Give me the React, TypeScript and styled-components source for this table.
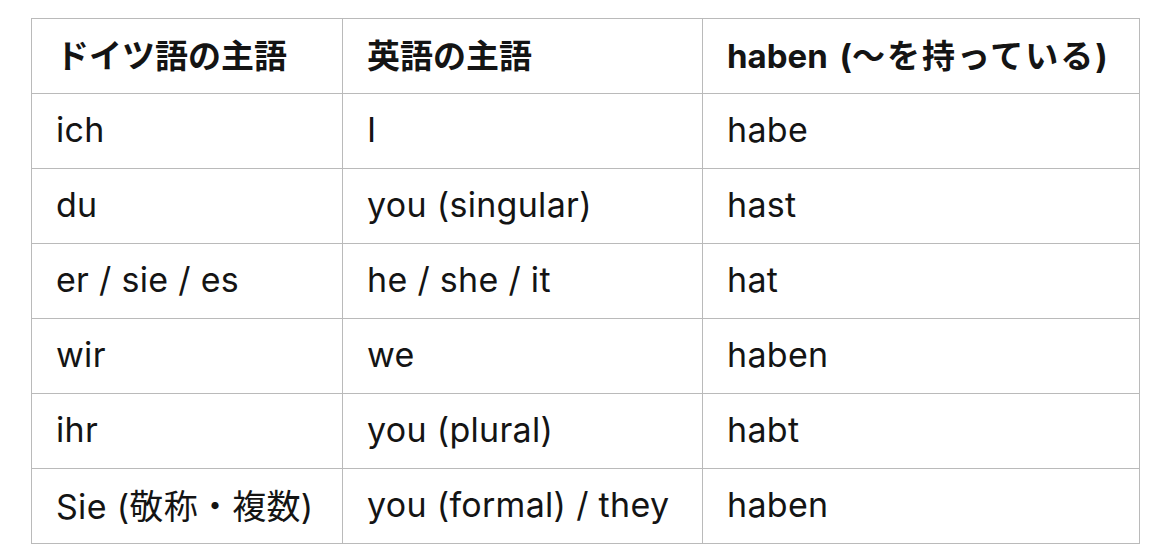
import React from 'react';
import styled, { createGlobalStyle } from 'styled-components';

type Row = [string, string, string];

const columns = [311, 360, 437];

const rows: Row[] = [
  ['ich', 'I', 'habe'],
  ['du', 'you (singular)', 'hast'],
  ['er / sie / es', 'he / she / it', 'hat'],
  ['wir', 'we', 'haben'],
  ['ihr', 'you (plural)', 'habt'],
  ['Sie (敬称・複数)', 'you (formal) / they', 'haben'],
];

const GlobalStyle = createGlobalStyle`
  html, body {
    margin: 0;
    padding: 0;
    background: #ffffff;
  }
  body {
    font-family: Inter, "Noto Sans CJK JP", sans-serif;
    color: #141414;
  }
`;

function App() {
  return (
    <Page>
      <GlobalStyle />
      <Table>
        <colgroup>
          {columns.map((w, i) => (
            <Col key={i} $width={w} />
          ))}
        </colgroup>
        <thead>
          <tr>
            <HeadCell>ドイツ語の主語</HeadCell>
            <HeadCell>英語の主語</HeadCell>
            <HeadCell>
              haben (<Kana>〜を持っている</Kana>)
            </HeadCell>
          </tr>
        </thead>
        <tbody>
          {rows.map(r => (
            <tr key={r[0]}>
              {r.map((c, i) => (
                <Cell key={i}>{c}</Cell>
              ))}
            </tr>
          ))}
        </tbody>
      </Table>
    </Page>
  );
}

export default App;

const Page = styled.div`
  padding: 18px 0 0 31px;
`;

const Table = styled.table`
  border-collapse: collapse;
  table-layout: fixed;
  width: 1108px;
`;

const Col = styled.col<{ $width: number }>`
  width: ${p => p.$width}px;
`;

const Cell = styled.td`
  height: 75px;
  box-sizing: border-box;
  padding: 0 0 4px 24px;
  border: 1.5px solid #bababa;
  font-size: 34px;
  font-weight: 400;
  letter-spacing: 0.3px;
  vertical-align: middle;
  white-space: nowrap;
`;

const HeadCell = styled(Cell).attrs({ as: 'th' })`
  font-size: 33px;
  font-weight: 700;
  letter-spacing: 0;
  word-spacing: 4px;
  text-align: left;
`;

const Kana = styled.span`
  letter-spacing: 2px;
`;
